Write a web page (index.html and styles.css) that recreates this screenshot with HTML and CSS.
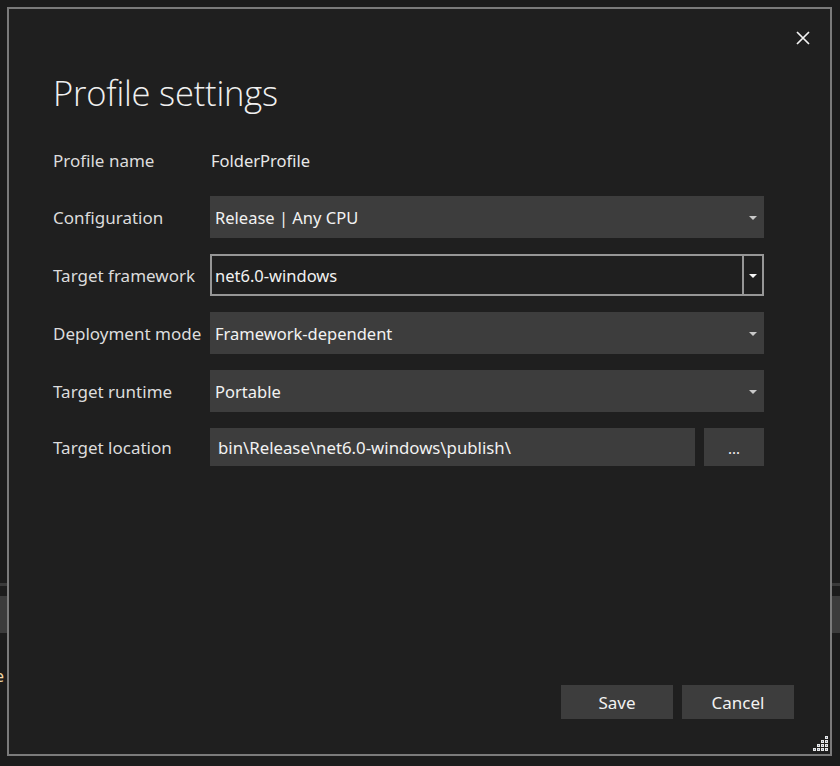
FILE: index.html
```html
<!DOCTYPE html>
<html>
<head>
<meta charset="utf-8">
<link rel="stylesheet" href="styles.css">
</head>
<body>
<div class="backdrop">
  <div class="bg-band"></div>
  <div class="bg-block"></div>
  <div class="bg-text">e</div>
</div>

<div class="dialog">
  <div class="topbar">
    <button class="close" aria-label="Close">
      <svg width="14" height="14" viewBox="0 0 14 14"><path d="M1 1 L13 13 M13 1 L1 13" stroke="#f2f2f2" stroke-width="1.7" fill="none"/></svg>
    </button>
  </div>
  <div class="content">
    <h1 class="title">Profile settings</h1>
    <div class="form">
      <div class="label">Profile name</div>
      <div class="value">FolderProfile</div>

      <div class="label">Configuration</div>
      <div class="select"><span>Release | Any CPU</span><span class="arrow"></span></div>

      <div class="label">Target framework</div>
      <div class="combo"><span class="combo-text">net6.0-windows</span><span class="combo-btn"><span class="arrow white"></span></span></div>

      <div class="label">Deployment mode</div>
      <div class="select"><span>Framework-dependent</span><span class="arrow"></span></div>

      <div class="label">Target runtime</div>
      <div class="select"><span>Portable</span><span class="arrow"></span></div>

      <div class="label">Target location</div>
      <div class="location">
        <div class="textbox">bin\Release\net6.0-windows\publish\</div>
        <div class="browse">...</div>
      </div>
    </div>
  </div>
  <div class="footer">
    <div class="btn">Save</div>
    <div class="btn">Cancel</div>
  </div>
  <svg class="grip" width="18" height="18" viewBox="0 0 18 18">
    <g fill="#e8e8e8">
      <rect x="14" y="1" width="3" height="3"/>
      <rect x="10" y="5" width="3" height="3"/><rect x="14" y="5" width="3" height="3"/>
      <rect x="6" y="9" width="3" height="3"/><rect x="10" y="9" width="3" height="3"/><rect x="14" y="9" width="3" height="3"/>
      <rect x="2" y="13" width="3" height="3"/><rect x="6" y="13" width="3" height="3"/><rect x="10" y="13" width="3" height="3"/><rect x="14" y="13" width="3" height="3"/>
    </g>
    <g fill="#7a8aa0">
      <rect x="15" y="2" width="1" height="1"/>
      <rect x="11" y="6" width="1" height="1"/><rect x="15" y="6" width="1" height="1"/>
      <rect x="7" y="10" width="1" height="1"/><rect x="11" y="10" width="1" height="1"/><rect x="15" y="10" width="1" height="1"/>
      <rect x="3" y="14" width="1" height="1"/><rect x="7" y="14" width="1" height="1"/><rect x="11" y="14" width="1" height="1"/><rect x="15" y="14" width="1" height="1"/>
    </g>
  </svg>
</div>
</body>
</html>
```

FILE: styles.css
```css
html, body {
  margin: 0;
  padding: 0;
}
body {
  width: 840px;
  height: 766px;
  background: #1c1c1c;
  overflow: hidden;
  position: relative;
  font-family: "Noto Sans", "Open Sans", sans-serif;
}

.backdrop {
  display: flex;
  flex-direction: column;
  padding-top: 583px;
}
.bg-band {
  height: 3px;
  background: #3a3a3a;
  margin-bottom: 10px;
}
.bg-block {
  height: 37px;
  background: #3c3c3c;
}
.bg-text {
  margin-top: 35px;
  margin-left: -5px;
  font-size: 16px;
  line-height: 16px;
  color: #f5d9a8;
}

.dialog {
  position: absolute;
  left: 7px;
  top: 7px;
  width: 825px;
  height: 749px;
  box-sizing: border-box;
  border: 2px solid #7b7b7b;
  background: #1f1f1f;
  display: flex;
  flex-direction: column;
}

.topbar {
  display: flex;
  justify-content: flex-end;
  padding: 17px 15px 0 0;
  height: 24px;
}
.close {
  width: 24px;
  height: 24px;
  padding: 0;
  border: 0;
  background: transparent;
  display: flex;
  align-items: center;
  justify-content: center;
}

.content {
  padding: 0 66px 0 44px;
}
.title {
  margin: 21px 0 0 0;
  font-family: "Open Sans", "Noto Sans", sans-serif;
  font-weight: 300;
  font-size: 34.5px;
  line-height: 44px;
  color: #f0f0f0;
  letter-spacing: -0.2px;
}

.form {
  display: grid;
  grid-template-columns: 157px 554px;
  grid-template-rows: 40px 42px 42px 42px 42px 38px;
  row-gap: 16px;
  margin-top: 25px;
}
.label {
  display: flex;
  align-items: center;
  font-size: 17px;
  color: #dcdcdc;
}
.value {
  display: flex;
  align-items: center;
  font-size: 16.5px;
  color: #e8e8e8;
  padding-left: 1px;
}

.select {
  display: flex;
  align-items: center;
  justify-content: space-between;
  background: #3d3d3d;
  padding: 0 7px 0 5px;
  font-size: 16.5px;
  color: #f2f2f2;
}
.arrow {
  width: 0;
  height: 0;
  border-left: 4px solid transparent;
  border-right: 4px solid transparent;
  border-top: 4px solid #c9c9c9;
  margin-top: 1px;
}
.arrow.white {
  border-top-color: #f5f5f5;
}

.combo {
  display: flex;
  box-sizing: border-box;
  border: 2px solid #969696;
  background: #1f1f1f;
}
.combo-text {
  flex: 1;
  display: flex;
  align-items: center;
  padding-left: 3px;
  font-size: 16.5px;
  color: #f2f2f2;
}
.combo-btn {
  width: 18px;
  border-left: 2px solid #969696;
  display: flex;
  align-items: center;
  justify-content: center;
}

.location {
  display: flex;
  gap: 9px;
}
.textbox {
  width: 485px;
  display: flex;
  align-items: center;
  background: #3d3d3d;
  padding-left: 8px;
  box-sizing: border-box;
  font-size: 16.8px;
  color: #f2f2f2;
}
.browse {
  flex: 1;
  display: flex;
  align-items: center;
  justify-content: center;
  background: #3d3d3d;
  font-size: 15px;
  color: #f2f2f2;
  padding-top: 1px;
}

.footer {
  margin-top: auto;
  display: flex;
  justify-content: flex-end;
  gap: 9px;
  padding: 0 36px 35px 0;
}
.btn {
  width: 112px;
  height: 34px;
  background: #3d3d3d;
  display: flex;
  align-items: center;
  justify-content: center;
  font-size: 17px;
  color: #f2f2f2;
}

.grip {
  position: absolute;
  right: 1px;
  bottom: 1px;
}
```
